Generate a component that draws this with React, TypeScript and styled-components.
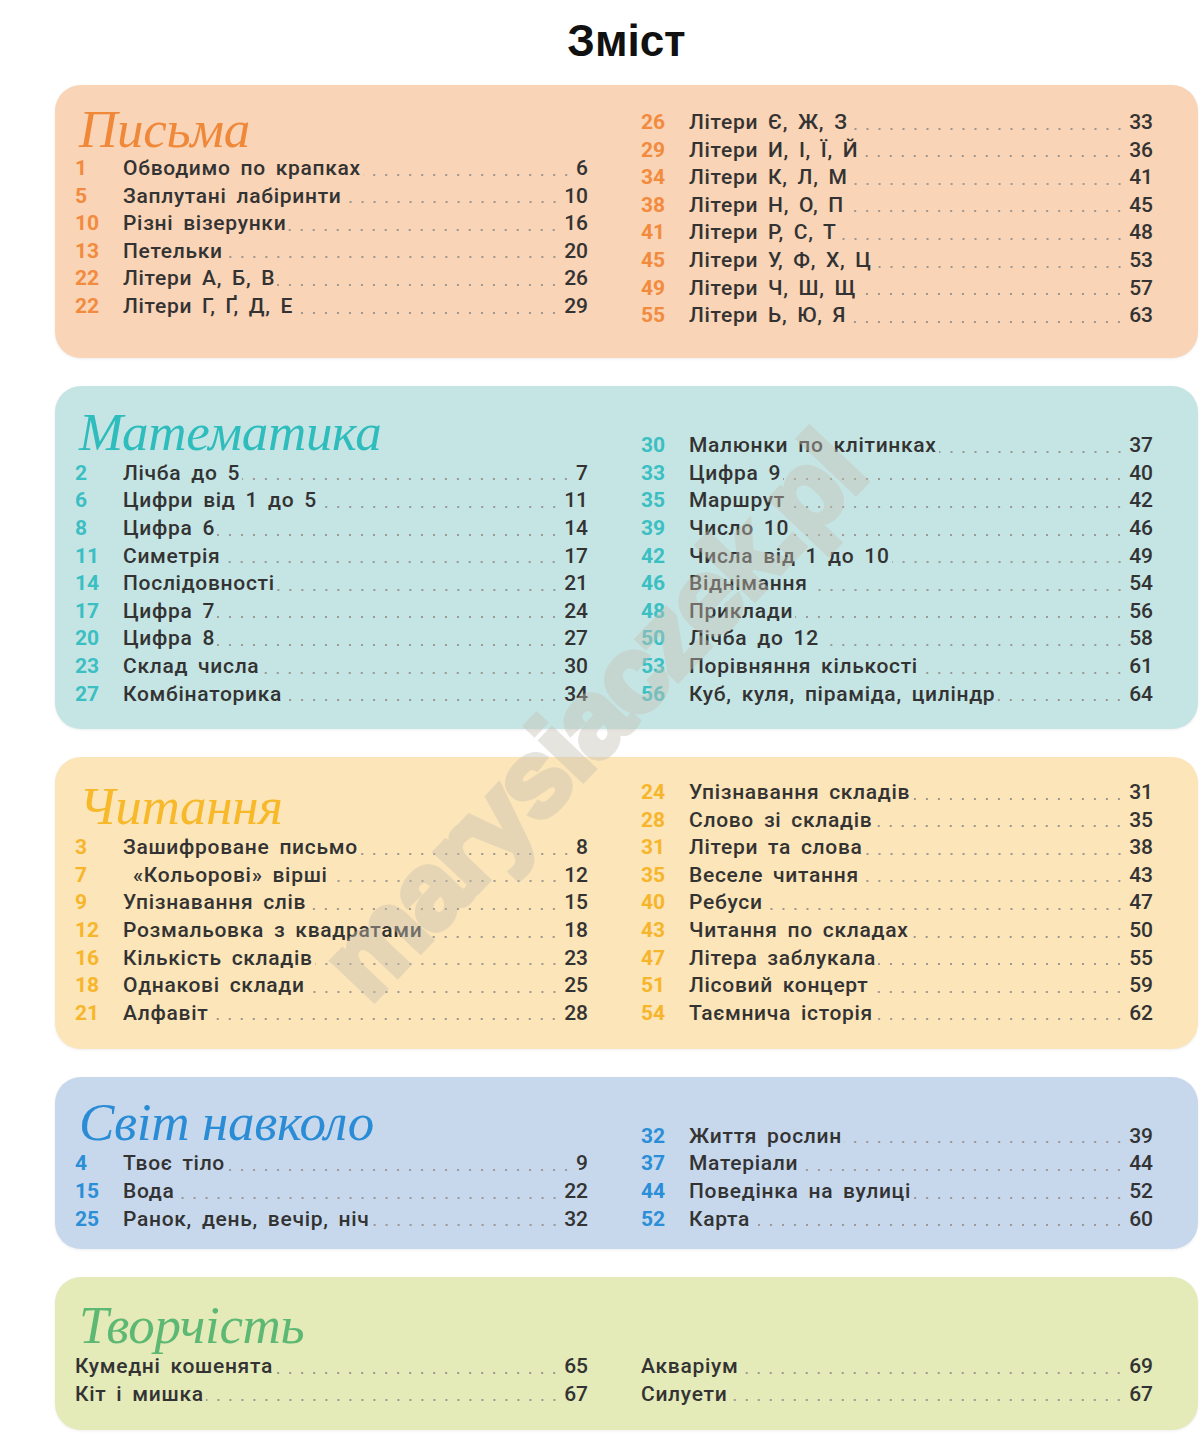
import React from 'react'
import styled, { createGlobalStyle } from 'styled-components'

const GlobalStyle = createGlobalStyle`
  body {
    margin: 0;
    background: #ffffff;
    font-family: Roboto, "Liberation Sans", sans-serif;
  }
`

type Entry = [number | null, string, number]

type Section = {
  title: string
  accent: string
  numColor: string
  bg: string
  pad: string
  align: 'start' | 'end'
  tight?: boolean
  left: Entry[]
  right: Entry[]
}

const sections: Section[] = [
  {
    title: 'Письма',
    accent: '#f0883a',
    numColor: '#f28b3e',
    bg: '#f9d4b6',
    pad: '24px 45px 28px 20px',
    align: 'start',
    tight: true,
    left: [
      [1, 'Обводимо по крапках', 6],
      [5, 'Заплутані лабіринти', 10],
      [10, 'Різні візерунки', 16],
      [13, 'Петельки', 20],
      [22, 'Літери А, Б, В', 26],
      [22, 'Літери Г, Ґ, Д, Е', 29],
    ],
    right: [
      [26, 'Літери Є, Ж, З', 33],
      [29, 'Літери И, І, Ї, Й', 36],
      [34, 'Літери К, Л, М', 41],
      [38, 'Літери Н, О, П', 45],
      [41, 'Літери Р, С, Т', 48],
      [45, 'Літери У, Ф, Х, Ц', 53],
      [49, 'Літери Ч, Ш, Щ', 57],
      [55, 'Літери Ь, Ю, Я', 63],
    ],
  },
  {
    title: 'Математика',
    accent: '#2fbcbd',
    numColor: '#3bbfc3',
    bg: '#c5e5e4',
    pad: '20px 45px 21px 20px',
    align: 'end',
    left: [
      [2, 'Лічба до 5', 7],
      [6, 'Цифри від 1 до 5', 11],
      [8, 'Цифра 6', 14],
      [11, 'Симетрія', 17],
      [14, 'Послідовності', 21],
      [17, 'Цифра 7', 24],
      [20, 'Цифра 8', 27],
      [23, 'Склад числа', 30],
      [27, 'Комбінаторика', 34],
    ],
    right: [
      [30, 'Малюнки по клітинках', 37],
      [33, 'Цифра 9', 40],
      [35, 'Маршрут', 42],
      [39, 'Число 10', 46],
      [42, 'Числа від 1 до 10', 49],
      [46, 'Віднімання', 54],
      [48, 'Приклади', 56],
      [50, 'Лічба до 12', 58],
      [53, 'Порівняння кількості', 61],
      [56, 'Куб, куля, піраміда, циліндр', 64],
    ],
  },
  {
    title: 'Читання',
    accent: '#f7b82a',
    numColor: '#f7b52b',
    bg: '#fce5b8',
    pad: '22px 45px 22px 20px',
    align: 'end',
    left: [
      [3, 'Зашифроване письмо', 8],
      [7, ' «Кольорові» вірші', 12],
      [9, 'Упізнавання слів', 15],
      [12, 'Розмальовка з квадратами', 18],
      [16, 'Кількість складів', 23],
      [18, 'Однакові склади', 25],
      [21, 'Алфавіт', 28],
    ],
    right: [
      [24, 'Упізнавання складів', 31],
      [28, 'Слово зі складів', 35],
      [31, 'Літери та слова', 38],
      [35, 'Веселе читання', 43],
      [40, 'Ребуси', 47],
      [43, 'Читання по складах', 50],
      [47, 'Літера заблукала', 55],
      [51, 'Лісовий концерт', 59],
      [54, 'Таємнича історія', 62],
    ],
  },
  {
    title: 'Світ навколо',
    accent: '#2b8cd6',
    numColor: '#2a8fd7',
    bg: '#c7d8ec',
    pad: '19px 45px 16px 20px',
    align: 'end',
    left: [
      [4, 'Твоє тіло', 9],
      [15, 'Вода', 22],
      [25, 'Ранок, день, вечір, ніч', 32],
    ],
    right: [
      [32, 'Життя рослин', 39],
      [37, 'Матеріали', 44],
      [44, 'Поведінка на вулиці', 52],
      [52, 'Карта', 60],
    ],
  },
  {
    title: 'Творчість',
    accent: '#5db873',
    numColor: '#5db873',
    bg: '#e4eab8',
    pad: '22px 45px 22px 20px',
    align: 'end',
    left: [
      [null, 'Кумедні кошенята', 65],
      [null, 'Кіт і мишка', 67],
    ],
    right: [
      [null, 'Акваріум', 69],
      [null, 'Силуети', 67],
    ],
  },
]

const Page = styled.div`
  position: relative;
  padding: 0 2px 12px 55px;
  overflow: hidden;
`

const Title = styled.h1`
  margin: 15px 0 18px;
  text-align: center;
  font-family: "Liberation Sans", Arial, sans-serif;
  font-size: 44px;
  line-height: 52px;
  font-weight: 700;
  color: #111;
`

const Stack = styled.div`
  display: flex;
  flex-direction: column;
  gap: 28px;
`

const Panel = styled.section<{ $bg: string; $pad: string; $align: string }>`
  display: grid;
  grid-template-columns: 513px 512px;
  column-gap: 53px;
  align-items: ${(p) => p.$align};
  padding: ${(p) => p.$pad};
  background: ${(p) => p.$bg};
  border-radius: 26px;
  box-shadow: 0 1px 3px rgba(0, 0, 0, 0.07);
`

const Column = styled.div`
  display: flex;
  flex-direction: column;
`

const Heading = styled.h2<{ $color: string; $tight?: boolean }>`
  margin: 0 0 0 4px;
  height: ${(p) => (p.$tight ? 46 : 54)}px;
  line-height: ${(p) => (p.$tight ? 40 : 52)}px;
  font-family: "Liberation Serif", "DejaVu Serif", serif;
  font-style: italic;
  font-weight: 400;
  font-size: 53px;
  letter-spacing: -0.3px;
  color: ${(p) => p.$color};
  white-space: nowrap;
`

const Row = styled.div`
  display: flex;
  height: 27.6px;
  line-height: 27.6px;
  font-size: 21px;
  font-weight: 500;
  color: #333333;
  letter-spacing: 0.7px;
  word-spacing: 4px;
`

const Num = styled.span<{ $color: string }>`
  flex: none;
  width: 48px;
  font-weight: 700;
  letter-spacing: 0;
  color: ${(p) => p.$color};
`

const Label = styled.span`
  flex: none;
  white-space: pre;
`

const Leader = styled.span`
  flex: 1;
  margin: 0 4px 0 2px;
  background-image: radial-gradient(circle, #9d9893 0.8px, transparent 1.4px);
  background-size: 12px 4px;
  background-repeat: repeat-x;
  background-position: right 0 bottom 6px;
`

const PageNo = styled.span`
  flex: none;
  text-align: right;
  letter-spacing: 0;
`

const Watermark = styled.div`
  position: absolute;
  left: 592px;
  top: 716px;
  transform: translate(-50%, -50%) rotate(-46.5deg);
  font-family: "Liberation Sans", Arial, sans-serif;
  font-weight: 700;
  font-size: 108px;
  letter-spacing: -3px;
  white-space: nowrap;
  color: #c6c0b3;
  -webkit-text-stroke: 6px #c6c0b3;
  opacity: 0.42;
  pointer-events: none;
`

const EntryRow: React.FC<{ entry: Entry; color: string }> = ({ entry, color }) => {
  const [num, label, page] = entry
  return (
    <Row>
      {num !== null && <Num $color={color}>{num}</Num>}
      <Label>{label}</Label>
      <Leader />
      <PageNo>{page}</PageNo>
    </Row>
  )
}

const App: React.FC = () => {
  return (
    <Page>
      <GlobalStyle />
      <Title>Зміст</Title>
      <Stack>
        {sections.map((s) => (
          <Panel key={s.title} $bg={s.bg} $pad={s.pad} $align={s.align}>
            <Column>
              <Heading $color={s.accent} $tight={s.tight}>{s.title}</Heading>
              {s.left.map((e, i) => (
                <EntryRow key={i} entry={e} color={s.numColor} />
              ))}
            </Column>
            <Column>
              {s.right.map((e, i) => (
                <EntryRow key={i} entry={e} color={s.numColor} />
              ))}
            </Column>
          </Panel>
        ))}
      </Stack>
      <Watermark>marysiaczek.pl</Watermark>
    </Page>
  )
}

export default App
